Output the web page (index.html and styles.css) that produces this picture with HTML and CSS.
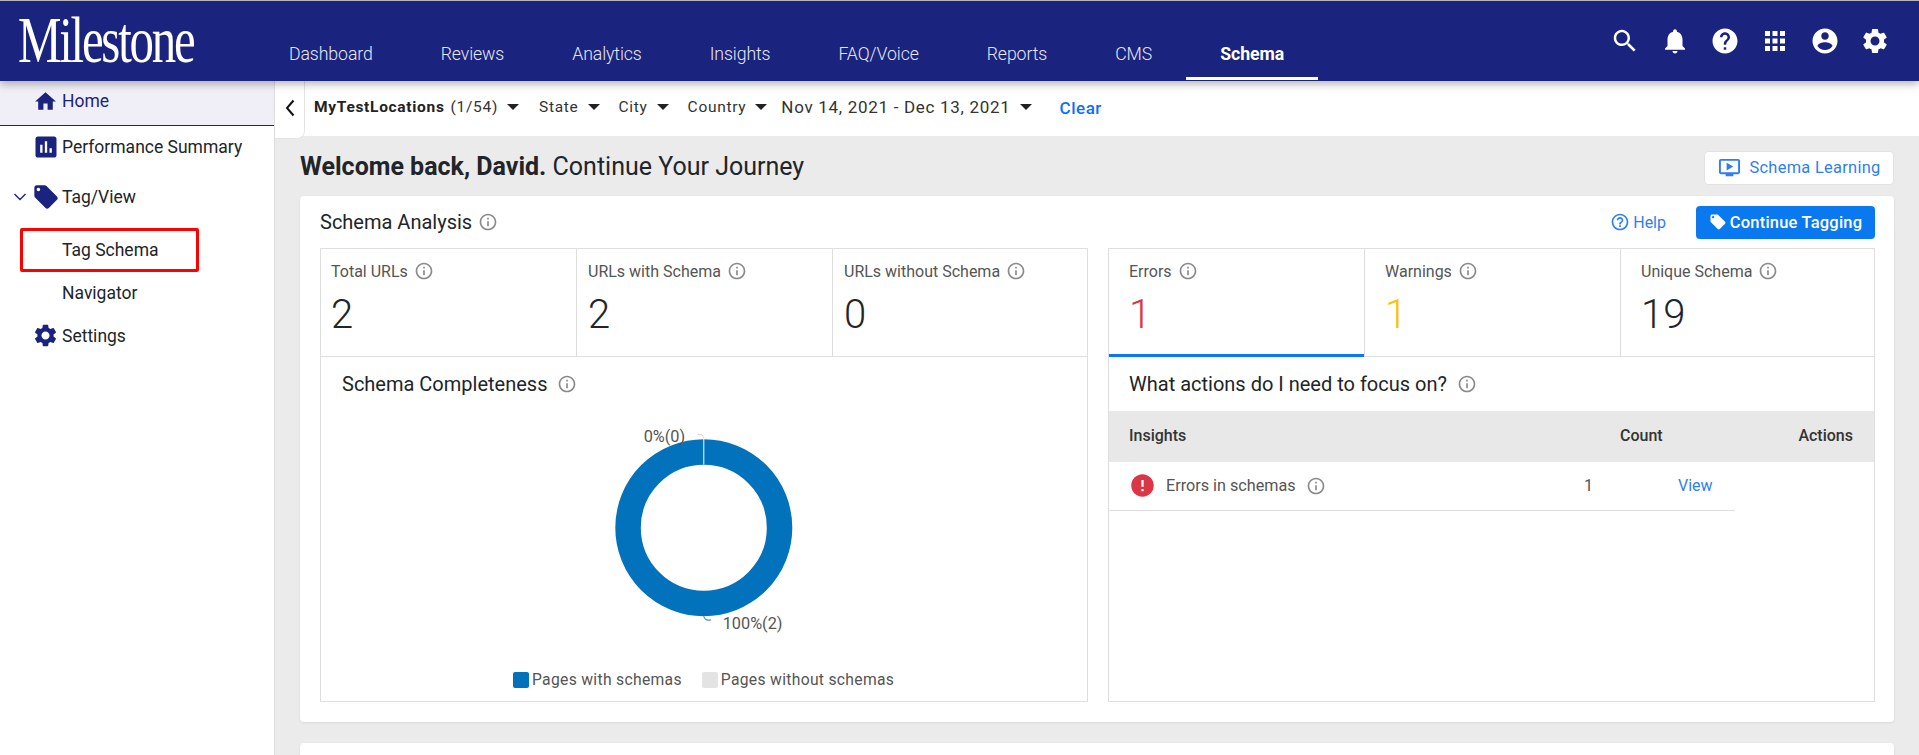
FILE: index.html
```html
<!DOCTYPE html>
<html lang="en">
<head>
<meta charset="utf-8">
<title>Milestone Schema</title>
<link rel="stylesheet" href="styles.css">
</head>
<body>
<svg class="defs" width="0" height="0" aria-hidden="true">
  <symbol id="i-search" viewBox="0 0 24 24"><path d="M15.5 14h-.79l-.28-.27C15.41 12.59 16 11.11 16 9.5 16 5.91 13.09 3 9.5 3S3 5.91 3 9.5 5.91 16 9.5 16c1.61 0 3.09-.59 4.23-1.57l.27.28v.79l5 4.99L20.49 19l-4.99-5zm-6 0C7.01 14 5 11.99 5 9.5S7.01 5 9.5 5 14 7.01 14 9.5 11.99 14 9.5 14z"/></symbol>
  <symbol id="i-bell" viewBox="0 0 24 24"><path d="M12 22c1.1 0 2-.9 2-2h-4c0 1.1.89 2 2 2zm6-6v-5c0-3.07-1.64-5.64-4.5-6.32V4c0-.83-.67-1.5-1.5-1.5s-1.5.67-1.5 1.5v.68C7.63 5.36 6 7.92 6 11v5l-2 2v1h16v-1l-2-2z"/></symbol>
  <symbol id="i-help" viewBox="0 0 24 24"><path d="M12 2C6.48 2 2 6.48 2 12s4.48 10 10 10 10-4.48 10-10S17.52 2 12 2zm1 17h-2v-2h2v2zm2.07-7.75l-.9.92C13.45 12.9 13 13.5 13 15h-2v-.5c0-1.1.45-2.1 1.17-2.83l1.24-1.26c.37-.36.59-.86.59-1.41 0-1.1-.9-2-2-2s-2 .9-2 2H8c0-2.21 1.79-4 4-4s4 1.79 4 4c0 .88-.36 1.68-.93 2.25z"/></symbol>
  <symbol id="i-apps" viewBox="0 0 24 24"><path d="M4 8h4V4H4v4zm6 12h4v-4h-4v4zm-6 0h4v-4H4v4zm0-6h4v-4H4v4zm6 0h4v-4h-4v4zm6-10v4h4V4h-4zm-6 4h4V4h-4v4zm6 6h4v-4h-4v4zm0 6h4v-4h-4v4z"/></symbol>
  <symbol id="i-account" viewBox="0 0 24 24"><path d="M12 2C6.48 2 2 6.48 2 12s4.48 10 10 10 10-4.48 10-10S17.52 2 12 2zm0 3c1.66 0 3 1.34 3 3s-1.34 3-3 3-3-1.34-3-3 1.34-3 3-3zm0 14.2c-2.5 0-4.71-1.28-6-3.22.03-1.99 4-3.08 6-3.08 1.99 0 5.97 1.09 6 3.08-1.29 1.94-3.5 3.22-6 3.22z"/></symbol>
  <symbol id="i-gear" viewBox="0 0 24 24"><path d="M19.14 12.94c.04-.3.06-.61.06-.94 0-.32-.02-.64-.07-.94l2.03-1.58c.18-.14.23-.41.12-.61l-1.92-3.32c-.12-.22-.37-.29-.59-.22l-2.39.96c-.5-.38-1.03-.7-1.62-.94l-.36-2.54c-.04-.24-.24-.41-.48-.41h-3.84c-.24 0-.43.17-.47.41l-.36 2.54c-.59.24-1.13.57-1.62.94l-2.39-.96c-.22-.08-.47 0-.59.22L2.74 8.87c-.12.21-.08.47.12.61l2.03 1.58c-.05.3-.09.63-.09.94s.02.64.07.94l-2.03 1.58c-.18.14-.23.41-.12.61l1.92 3.32c.12.22.37.29.59.22l2.39-.96c.5.38 1.03.7 1.62.94l.36 2.54c.05.24.24.41.48.41h3.84c.24 0 .44-.17.47-.41l.36-2.54c.59-.24 1.13-.56 1.62-.94l2.39.96c.22.08.47 0 .59-.22l1.92-3.32c.12-.22.07-.47-.12-.61l-2.01-1.58zM12 15.6c-1.98 0-3.6-1.62-3.6-3.6s1.62-3.6 3.6-3.6 3.6 1.62 3.6 3.6-1.62 3.6-3.6 3.6z"/></symbol>
  <symbol id="i-home" viewBox="0 0 24 24"><path d="M10 20v-6h4v6h5v-8h3L12 3 2 12h3v8z"/></symbol>
  <symbol id="i-bars" viewBox="0 0 24 24"><path d="M19 3H5c-1.1 0-2 .9-2 2v14c0 1.1.9 2 2 2h14c1.1 0 2-.9 2-2V5c0-1.1-.9-2-2-2zM9 17H7v-7h2v7zm4 0h-2V7h2v10zm4 0h-2v-4h2v4z"/></symbol>
  <symbol id="i-tag" viewBox="0 0 24 24"><path d="M21.41 11.58l-9-9C12.05 2.22 11.55 2 11 2H4c-1.1 0-2 .9-2 2v7c0 .55.22 1.05.59 1.42l9 9c.36.36.86.58 1.41.58.55 0 1.05-.22 1.41-.59l7-7c.37-.36.59-.86.59-1.41 0-.55-.23-1.06-.59-1.42zM5.5 7C4.67 7 4 6.33 4 5.5S4.67 4 5.5 4 7 4.67 7 5.5 6.33 7 5.5 7z"/></symbol>
  <symbol id="i-video" viewBox="0 0 24 24"><path d="M21 3H3c-1.11 0-2 .89-2 2v12c0 1.1.89 2 2 2h5v2h8v-2h5c1.1 0 1.99-.9 1.99-2L23 5c0-1.11-.9-2-2-2zm0 14H3V5h18v12zm-5-6l-7 4V7z"/></symbol>
  <symbol id="i-helpo" viewBox="0 0 24 24"><path d="M11 18h2v-2h-2v2zm1-16C6.48 2 2 6.48 2 12s4.48 10 10 10 10-4.48 10-10S17.52 2 12 2zm0 18c-4.41 0-8-3.59-8-8s3.59-8 8-8 8 3.59 8 8-3.59 8-8 8zm0-14c-2.21 0-4 1.79-4 4h2c0-1.1.9-2 2-2s2 .9 2 2c0 2-3 1.75-3 5h2c0-2.25 3-2.5 3-5 0-2.21-1.79-4-4-4z"/></symbol>
  <symbol id="i-info" viewBox="0 0 24 24"><path d="M11 7h2v2h-2zm0 4h2v6h-2zm1-9C6.48 2 2 6.48 2 12s4.48 10 10 10 10-4.48 10-10S17.52 2 12 2zm0 18c-4.41 0-8-3.59-8-8s3.59-8 8-8 8 3.59 8 8-3.59 8-8 8z"/></symbol>
  <symbol id="i-error" viewBox="0 0 24 24"><path d="M12 2C6.48 2 2 6.48 2 12s4.48 10 10 10 10-4.48 10-10S17.52 2 12 2zm1 15h-2v-2h2v2zm0-4h-2V7h2v6z"/></symbol>
</svg>

<header class="topbar">
  <div class="logo"><span class="logo-text">Milestone</span></div>
  <nav class="tabs">
    <a class="tab">Dashboard</a>
    <a class="tab">Reviews</a>
    <a class="tab">Analytics</a>
    <a class="tab">Insights</a>
    <a class="tab">FAQ/Voice</a>
    <a class="tab">Reports</a>
    <a class="tab">CMS</a>
    <a class="tab active">Schema</a>
  </nav>
  <div class="top-icons">
    <svg class="top-icon"><use href="#i-search"/></svg>
    <svg class="top-icon"><use href="#i-bell"/></svg>
    <svg class="top-icon"><use href="#i-help"/></svg>
    <svg class="top-icon"><use href="#i-apps"/></svg>
    <svg class="top-icon"><use href="#i-account"/></svg>
    <svg class="top-icon"><use href="#i-gear"/></svg>
  </div>
</header>

<div class="shell">
  <aside class="sidebar">
    <div class="side-row home"><svg class="side-icon"><use href="#i-home"/></svg><span>Home</span></div>
    <div class="side-row perf"><svg class="side-icon"><use href="#i-bars"/></svg><span>Performance Summary</span></div>
    <div class="side-row tagview">
      <svg class="caret" viewBox="0 0 16 16"><path d="M2.5 5 L8 10.5 L13.5 5" fill="none" stroke="#1a237e" stroke-width="1.4"/></svg>
      <svg class="side-icon"><use href="#i-tag"/></svg><span>Tag/View</span>
    </div>
    <div class="side-row sub"><span>Tag Schema</span><i class="redbox"></i></div>
    <div class="side-row sub nav2"><span>Navigator</span></div>
    <div class="side-row settings"><svg class="side-icon"><use href="#i-gear"/></svg><span>Settings</span></div>
  </aside>

  <main class="main">
    <div class="filterbar">
      <div class="collapse"><svg class="chev" viewBox="0 0 12 20"><path d="M9.5 2.5 L3 10 L9.5 17.5" fill="none" stroke="#111" stroke-width="2"/></svg></div>
      <div class="filters">
        <span class="flt first"><b>MyTestLocations</b>(1/54)<i class="arrow"></i></span>
        <span class="flt state">State<i class="arrow"></i></span>
        <span class="flt city">City<i class="arrow"></i></span>
        <span class="flt country">Country<i class="arrow"></i></span>
        <span class="flt date">Nov 14, 2021 - Dec 13, 2021<i class="arrow"></i></span>
        <a class="clear">Clear</a>
      </div>
    </div>

    <div class="content">
      <div class="welcome">
        <h1 class="greet"><b>Welcome back, David.</b> Continue Your Journey</h1>
        <button class="learn"><svg class="learn-icon"><use href="#i-video"/></svg>Schema Learning</button>
      </div>

      <section class="card">
        <div class="card-head">
          <h2 class="card-title">Schema Analysis<svg class="info big"><use href="#i-info"/></svg></h2>
          <div class="card-actions">
            <a class="help"><svg class="help-icon"><use href="#i-helpo"/></svg>Help</a>
            <button class="cta"><svg class="cta-icon"><use href="#i-tag"/></svg>Continue Tagging</button>
          </div>
        </div>

        <div class="panels">
          <div class="panel">
            <div class="metrics">
              <div class="metric"><div class="m-label">Total URLs<svg class="info"><use href="#i-info"/></svg></div><div class="m-value">2</div></div>
              <div class="metric"><div class="m-label">URLs with Schema<svg class="info"><use href="#i-info"/></svg></div><div class="m-value">2</div></div>
              <div class="metric"><div class="m-label">URLs without Schema<svg class="info"><use href="#i-info"/></svg></div><div class="m-value">0</div></div>
            </div>
            <div class="sub-head left-sub">Schema Completeness<svg class="info wide"><use href="#i-info"/></svg></div>
            <svg class="donut" viewBox="0 0 766 259">
              <circle cx="382.8" cy="116.7" r="75.75" fill="none" stroke="#0272bd" stroke-width="25.5"/>
              <line x1="382.8" y1="28" x2="382.8" y2="53.5" stroke="#fff" stroke-width="1"/>
              <path d="M376.5 23.5 q6 -1 6 4" fill="none" stroke="#d9d9d9" stroke-width="1"/>
              <path d="M382.8 205.5 q1 4.5 7 3.5" fill="none" stroke="#0272bd" stroke-width="1"/>
              <text class="chart-label" x="322.7" y="31">0%(0)</text>
              <text class="chart-label" x="401.7" y="218">100%(2)</text>
            </svg>
            <div class="legend">
              <span class="leg"><i class="sw blue"></i>Pages with schemas</span>
              <span class="leg"><i class="sw grey"></i>Pages without schemas</span>
            </div>
          </div>

          <div class="panel">
            <div class="metrics">
              <div class="metric sel"><div class="m-label">Errors<svg class="info"><use href="#i-info"/></svg></div><div class="m-value red">1</div></div>
              <div class="metric"><div class="m-label">Warnings<svg class="info"><use href="#i-info"/></svg></div><div class="m-value amber">1</div></div>
              <div class="metric"><div class="m-label">Unique Schema<svg class="info"><use href="#i-info"/></svg></div><div class="m-value">19</div></div>
            </div>
            <div class="sub-head">What actions do I need to focus on?<svg class="info wide"><use href="#i-info"/></svg></div>
            <div class="thead">
              <span class="th-ins">Insights</span>
              <span class="th-count">Count</span>
              <span class="th-act">Actions</span>
            </div>
            <div class="trow">
              <svg class="err-icon"><use href="#i-error"/></svg>
              <span class="tr-name">Errors in schemas<svg class="info wide"><use href="#i-info"/></svg></span>
              <span class="tr-count">1</span>
              <a class="tr-view">View</a>
            </div>
          </div>
        </div>
      </section>

      <section class="card second"></section>
    </div>
  </main>
</div>
</body>
</html>
```

FILE: styles.css
```css
* { box-sizing: border-box; }
html, body { margin: 0; padding: 0; height: 755px; overflow: hidden; }
body { font-family: Roboto, "Liberation Sans", sans-serif; color: #212529; background: #fff; display: flex; flex-direction: column; }
.defs { position: absolute; }
svg { display: block; fill: currentColor; }

/* Top bar */
.topbar { height: 81px; flex: none; background: #1a237e; border-top: 1px solid #b5b5b5; display: flex; color: #fff; position: relative; z-index: 3; box-shadow: 0 3px 8px rgba(0,0,0,.3); }
.logo { width: 289px; padding: 5px 0 0 18px; flex: none; }
.logo-text { display: inline-block; font-family: "Liberation Serif", serif; font-size: 66px; line-height: 68px; letter-spacing: -3px; transform: scaleX(.74); transform-origin: left center; }
.tabs { display: flex; gap: 68px; flex: none; }
.tab { display: block; height: 79px; padding-top: 43px; font-size: 17.7px; line-height: 20px; color: #e6e7f2; font-weight: 300; letter-spacing: -.1px; }
.tab.active { color: #fff; font-weight: 700; border-bottom: 3px solid #fff; padding: 43px 34px 0; margin-left: -34px; letter-spacing: -.05px; }
.top-icons { margin-left: auto; display: flex; gap: 20px; padding: 25px 29px 0 0; }
.top-icon { width: 30px; height: 30px; }

.shell { flex: 1; display: flex; min-height: 0; }

/* Sidebar */
.sidebar { width: 275px; flex: none; border-right: 1px solid #ddd; font-size: 17.5px; color: #212529; }
.side-row { display: flex; align-items: center; padding-left: 33px; height: 43px; position: relative; }
.side-icon { flex: none; color: #1a237e; }
.home { height: 45px; background: #f0eff7; border-bottom: 1px solid #1a237e; color: #1a237e; padding-bottom: 4px; }
.home .side-icon { width: 25px; height: 25px; margin-right: 4px; }
.perf { height: 42px; margin-bottom: 7px; padding-left: 32px; }
.perf .side-icon { width: 28px; height: 28px; margin-right: 2px; }
.tagview { padding-left: 12px; height: 43px; margin-bottom: 10px; }
.caret { width: 16px; height: 16px; margin-right: 4px; flex: none; }
.tagview .side-icon { width: 28px; height: 28px; margin-right: 2px; }
.sub { padding-left: 62px; height: 43px; }
.settings { padding-left: 32px; height: 43px; }
.settings .side-icon { width: 27px; height: 27px; margin-right: 3px; }
.redbox { position: absolute; left: 20px; top: 0; width: 179px; height: 44px; border: 3px solid #f00; border-radius: 2px; }

/* Main */
.main { flex: 1; min-width: 0; display: flex; flex-direction: column; background: #ebebeb; }
.filterbar { height: 55px; flex: none; background: #fff; display: flex; }
.collapse { width: 30px; height: 58px; background: #fff; border-right: 1px solid #e4e4e4; border-bottom: 1px solid #e4e4e4; border-radius: 0 0 8px 0; flex: none; display: flex; align-items: center; justify-content: center; position: relative; z-index: 1; padding-bottom: 3px; }
.chev { width: 12px; height: 20px; }
.filters { display: flex; align-items: center; font-size: 15.5px; letter-spacing: .7px; color: #333; padding: 0 0 3px 9px; white-space: nowrap; }
.flt { display: flex; align-items: center; }
.flt b { font-weight: 700; margin-right: 6px; color: #222; }
.arrow { width: 0; height: 0; margin-left: 9px; border: 6.5px solid transparent; border-top: 6.5px solid #222; border-bottom: 0; }
.first { margin-right: 20px; }
.state { margin-right: 19px; }
.city { margin-right: 19px; }
.country { margin-right: 14px; }
.date { font-size: 17px; margin-right: 28px; }
.clear { font-size: 17px; font-weight: 500; color: #0d6efd; padding-top: 2px; letter-spacing: .5px; }

.content { flex: 1; min-height: 0; padding: 0 25px; overflow: hidden; }
.welcome { height: 60px; display: flex; align-items: center; justify-content: space-between; }
.greet { margin: 0; font-size: 25px; font-weight: 400; color: #212529; }
.greet b { font-weight: 700; }
.learn { height: 34px; width: 190px; margin-top: 3px; background: #fff; border: 1px solid #e2e2e2; border-radius: 4px; color: #2f7ef0; font: 400 16.4px Roboto, sans-serif; letter-spacing: .3px; display: flex; align-items: center; justify-content: center; padding: 0 0 0 1px; }
.learn-icon { width: 23px; height: 23px; margin-right: 8px; }

.card { background: #fff; border-radius: 4px; box-shadow: 0 1px 3px rgba(0,0,0,.08); height: 526px; padding: 0 19px 0 20px; }
.card.second { margin-top: 21px; height: 60px; }
.card-head { height: 52px; display: flex; align-items: center; justify-content: space-between; }
.card-title { margin: 0; font-size: 20px; font-weight: 400; color: #212529; display: flex; align-items: center; }
.card-actions { display: flex; align-items: center; }
.help { display: flex; align-items: center; color: #2f80ed; font-size: 16px; margin-right: 30px; }
.help-icon { width: 20px; height: 20px; margin-right: 3px; }
.cta { height: 33px; width: 179px; background: #0a78ef; border: 0; border-radius: 4px; color: #fff; font: 500 16.5px Roboto, sans-serif; display: flex; align-items: center; justify-content: center; padding: 0; letter-spacing: .2px; }
.cta-icon { width: 18px; height: 18px; margin-right: 3px; }

.info { width: 20px; height: 20px; color: #8a8a8a; margin-left: 6px; flex: none; }
.info.big { margin-left: 6px; }
.info.wide { margin-left: 10px; }

.panels { display: grid; grid-template-columns: 1fr 1fr; gap: 20px; }
.panel { border: 1px solid #dedede; height: 454px; }
.metrics { display: grid; grid-template-columns: 256px 256px 1fr; height: 108px; border-bottom: 1px solid #dedede; }
.metric { border-right: 1px solid #dedede; padding: 13px 11px 0; position: relative; }
.metric:first-child { padding-left: 10px; }
.metric:last-child { border-right: 0; }
.m-label { font-size: 16px; color: #555; display: flex; align-items: center; height: 18px; }
.m-value { font-size: 40px; line-height: 48px; margin-top: 11px; font-weight: 350; color: #212529; }
.m-value.red { color: #dc3545; }
.m-value.amber { color: #ffc107; }
.panel + .panel .metric { padding-left: 20px; }
.metric.sel::after { content: ""; position: absolute; left: 0; right: 0; bottom: -1px; height: 3px; background: #0a78ef; }

.sub-head { height: 54px; display: flex; align-items: center; font-size: 20px; padding-left: 20px; color: #212529; }
.left-sub { padding-left: 21px; }
.donut { width: 766px; height: 259px; }
.chart-label { font: 400 16.3px Roboto, sans-serif; fill: #555; }
.legend { display: flex; padding-left: 192px; font-size: 15.7px; color: #555; letter-spacing: .3px; }
.leg { display: flex; align-items: center; margin-right: 20px; }
.sw { width: 16px; height: 16px; border-radius: 2px; margin-right: 3px; }
.sw.blue { background: #0272bd; }
.sw.grey { background: #e3e3e3; }

.thead { height: 51px; background: #e8e8e8; display: flex; align-items: center; padding: 0 21px 2px 20px; font-size: 16px; font-weight: 500; color: #333; }
.th-ins { width: 491px; }
.th-act { margin-left: auto; }
.trow { height: 49px; width: 626px; display: flex; align-items: center; border-bottom: 1px solid #dedede; padding: 0 0 1px 22px; font-size: 16.2px; color: #555; }
.err-icon { width: 27px; height: 27px; color: #dc3545; margin-left: -2px; flex: none; }
.tr-name { display: flex; align-items: center; width: 418px; margin-left: 10px; }
.tr-count { width: 94px; }
.tr-view { color: #2f80ed; font-size: 16px; }
```
